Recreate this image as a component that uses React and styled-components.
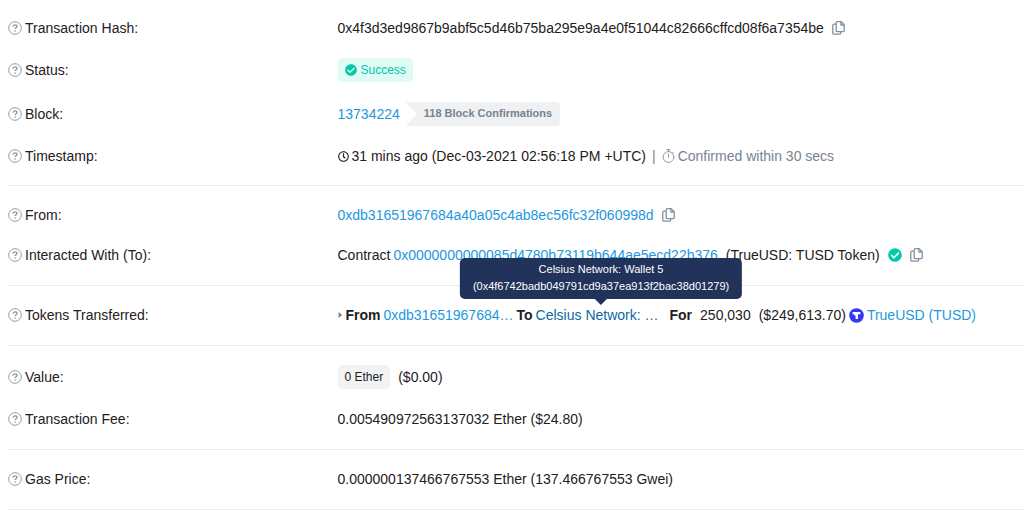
import styled, { createGlobalStyle } from "styled-components";
import { FaCheckCircle, FaRegClock } from "react-icons/fa";

const GlobalStyle = createGlobalStyle`
  * {
    box-sizing: border-box;
  }

  body {
    margin: 0;
    background-color: #fff;
    color: #1e2022;
    font-family: "Liberation Sans", Arial, sans-serif;
    font-size: 14px;
    line-height: 20px;
  }
`;

const Details = styled.dl`
  margin: 0;
  padding-left: 8px;
`;

const Group = styled.div`
  display: flex;
  flex-direction: column;
  gap: 20px;
  padding: ${(props) => (props.$first ? "18px 0 19px" : "19px 0 20px")};
  border-bottom: 1px solid #ebedf0;
`;

const Row = styled.div`
  display: grid;
  grid-template-columns: 12fr 25fr;
  align-items: center;
`;

const Label = styled.dt`
  display: flex;
  align-items: center;
  gap: 3px;
`;

const Value = styled.dd`
  display: flex;
  align-items: center;
  gap: ${(props) => props.$gap || 8}px;
  margin: 0;
  white-space: nowrap;
`;

const Link = styled.a`
  color: ${(props) => (props.$hover ? "#0a6aa1" : "#1e98dd")};
  text-decoration: none;
`;

const Muted = styled.span`
  display: flex;
  align-items: center;
  gap: 3px;
  color: #77838f;
`;

const Inline = styled.span`
  display: flex;
  align-items: center;
  gap: ${(props) => props.$gap || 3}px;
`;

const Badge = styled.span`
  display: flex;
  align-items: center;
  gap: 4px;
  height: 24px;
  padding: 0 7px;
  border-radius: 5px;
  font-size: 12px;
  color: ${(props) => (props.$success ? "#00c9a7" : "#1e2022")};
  background-color: ${(props) => (props.$success ? "#e0faf5" : "#f1f2f4")};
`;

const Confirmations = styled.span`
  height: 24px;
  padding: 0 8px 0 18px;
  border-radius: 0 4px 4px 0;
  background-color: #f0f1f3;
  clip-path: polygon(0 0, 100% 0, 100% 100%, 0 100%, 11px 50%);
  color: #77838f;
  font-size: 11px;
  font-weight: bold;
  line-height: 23px;
`;

const CopyButton = styled.button`
  display: flex;
  padding: 0;
  border: none;
  background: none;
  color: #8491a0;
  cursor: pointer;
`;

const Verified = styled(FaCheckCircle)`
  color: #00c9a7;
`;

const TooltipAnchor = styled.span`
  position: relative;
  padding-right: 8px;
`;

const Tooltip = styled.span`
  position: absolute;
  bottom: 100%;
  left: 50%;
  transform: translateX(-50%);
  margin-bottom: 6px;
  padding: 3px 13px 4px;
  border-radius: 5px;
  background-color: #21325b;
  color: #fff;
  font-size: 11px;
  line-height: 17px;
  text-align: center;

  &::after {
    content: "";
    position: absolute;
    top: 100%;
    left: 50%;
    margin-left: -6px;
    border: 6px solid transparent;
    border-bottom: none;
    border-top-color: #21325b;
  }
`;

function HelpIcon() {
  return (
    <svg width="14" height="14" viewBox="0 0 14 14" fill="none" stroke="#8592a0" aria-hidden="true">
      <circle cx="7" cy="7" r="6.3" strokeWidth="0.9" />
      <path d="M5 5.7c.1-1.3.9-1.9 2-1.9s2 .6 2 1.6c0 1.4-1.9 1.3-1.9 2.6" strokeWidth="1.3" />
      <circle cx="7.1" cy="10" r="0.8" fill="#8592a0" stroke="none" />
    </svg>
  );
}

function StopwatchIcon() {
  return (
    <svg width="13" height="14" viewBox="0 0 13 14" fill="none" stroke="#8491a0" strokeLinecap="round" aria-hidden="true">
      <circle cx="6.5" cy="8" r="5.4" strokeWidth="0.9" />
      <path d="M6.5 2.6V.7M4.8.6h3.4M10.4 4.1l.9-.9M6.5 5v3.4" strokeWidth="0.9" />
    </svg>
  );
}

function CaretIcon() {
  return (
    <svg width="5" height="8" viewBox="0 0 5 8" aria-hidden="true">
      <path d="M.6 1l3.6 3L.6 7z" fill="#77838f" />
    </svg>
  );
}

function CopyIcon() {
  return (
    <svg width="13" height="14" viewBox="0 0 13 14" fill="none" stroke="currentColor" strokeWidth="1.3" strokeLinejoin="round" aria-hidden="true">
      <path d="M5.2.7h4l3 3v6c0 .6-.4 1-1 1h-6c-.6 0-1-.4-1-1v-8c0-.6.4-1 1-1z" />
      <path d="M8.9.8v3.2h3.2" />
      <path d="M4.200 3.200H1.800c-.6 0-1 .4-1 1v8c0 .6.4 1 1 1h5.800c.6 0 1-.4 1-1v-1.500" />
    </svg>
  );
}

function TrueUsdIcon() {
  return (
    <svg width="15" height="15" viewBox="0 0 15 15" aria-hidden="true">
      <circle cx="7.5" cy="7.5" r="7.3" fill="#3338f5" />
      <path d="M3.6 4h7.8v2.300H9V11H6.600V7.500H5.300V6.300H3.600z" fill="#fff" />
    </svg>
  );
}

function Copy({ label }) {
  return (
    <CopyButton type="button" aria-label={label}>
      <CopyIcon />
    </CopyButton>
  );
}

function Field({ label, gap, children }) {
  return (
    <Row>
      <Label>
        <HelpIcon />
        {label}:
      </Label>
      <Value $gap={gap}>{children}</Value>
    </Row>
  );
}

function App() {
  return (
    <>
      <GlobalStyle />
      <Details>
        <Group $first>
          <Field label="Transaction Hash">
            0x4f3d3ed9867b9abf5c5d46b75ba295e9a4e0f51044c82666cffcd08f6a7354be
            <Copy label="Copy transaction hash" />
          </Field>
          <Field label="Status">
            <Badge $success>
              <FaCheckCircle />
              Success
            </Badge>
          </Field>
          <Field label="Block" gap={6}>
            <Link href="#block">13734224</Link>
            <Confirmations>118 Block Confirmations</Confirmations>
          </Field>
          <Field label="Timestamp" gap={6}>
            <Inline>
              <FaRegClock size={11} />
              31 mins ago (Dec-03-2021 02:56:18 PM +UTC)
            </Inline>
            <Muted>|</Muted>
            <Muted>
              <StopwatchIcon />
              Confirmed within 30 secs
            </Muted>
          </Field>
        </Group>

        <Group>
          <Field label="From">
            <Link href="#from">0xdb31651967684a40a05c4ab8ec56fc32f060998d</Link>
            <Copy label="Copy sender address" />
          </Field>
          <Field label="Interacted With (To)">
            <Inline>
              Contract
              <Link href="#contract">0x0000000000085d4780b73119b644ae5ecd22b376</Link>
            </Inline>
            (TrueUSD: TUSD Token)
            <Verified size={14} />
            <Copy label="Copy contract address" />
          </Field>
        </Group>

        <Group>
          <Field label="Tokens Transferred" gap={3}>
            <CaretIcon />
            <b>From</b>
            <Link href="#sender">0xdb31651967684…</Link>
            <b>To</b>
            <TooltipAnchor>
              <Link href="#recipient" $hover aria-describedby="recipient-tip">
                Celsius Network: …
              </Link>
              <Tooltip id="recipient-tip" role="tooltip">
                Celsius Network: Wallet 5<br />
                (0x4f6742badb049791cd9a37ea913f2bac38d01279)
              </Tooltip>
            </TooltipAnchor>
            <Inline $gap={8}>
              <b>For</b>
              <span>250,030</span>
              <span>($249,613.70)</span>
            </Inline>
            <TrueUsdIcon />
            <Link href="#token">TrueUSD (TUSD)</Link>
          </Field>
        </Group>

        <Group>
          <Field label="Value">
            <Badge>0 Ether</Badge>
            ($0.00)
          </Field>
          <Field label="Transaction Fee">0.005490972563137032 Ether ($24.80)</Field>
        </Group>

        <Group>
          <Field label="Gas Price">0.000000137466767553 Ether (137.466767553 Gwei)</Field>
        </Group>
      </Details>
    </>
  );
}

export default App;
